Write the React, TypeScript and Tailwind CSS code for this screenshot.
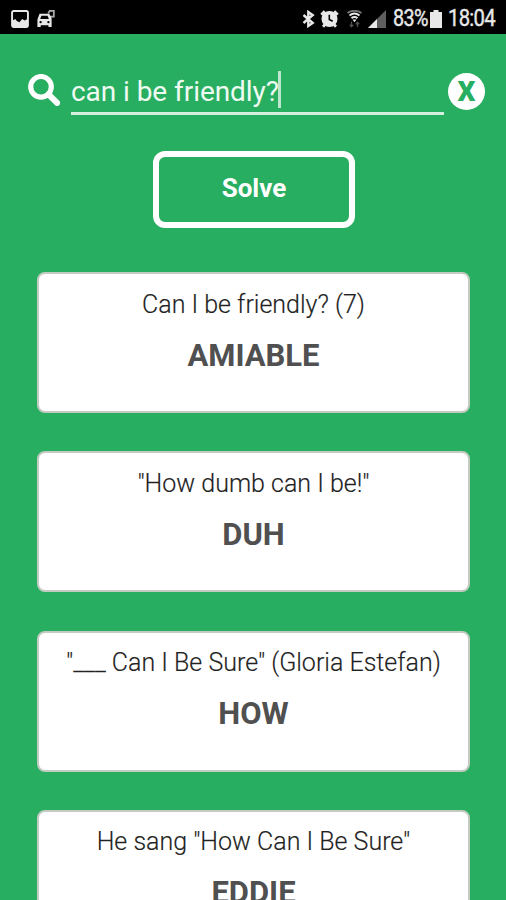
import { useState } from "react";

const results = [
  { clue: "Can I be friendly? (7)", answer: "AMIABLE" },
  { clue: "\"How dumb can I be!\"", answer: "DUH" },
  { clue: "\"___ Can I Be Sure\" (Gloria Estefan)", answer: "HOW" },
  { clue: "He sang \"How Can I Be Sure\"", answer: "EDDIE" },
];

function StatusBar() {
  return (
    <div className="flex h-[34px] shrink-0 items-center bg-black pt-[3px] pr-[11px] pl-[11px] text-[#e8e8e8]">
      <svg className="h-[18px] w-[18px]" viewBox="0 0 17 17">
        <rect x="1" y="1" width="15" height="15" rx="1.5" fill="none" stroke="currentColor" strokeWidth="1.8" />
        <path d="M1.5 10 4 8.5l1.5 2L8 11.5l2.5-3L13 10l2.5-1.5v7h-14z" fill="currentColor" />
      </svg>
      <svg className="ml-2 h-[18px] w-[18px]" viewBox="0 0 17 17" fill="currentColor">
        <path
          fillRule="evenodd"
          d="M2.4 3.5h9.2l2.2 5V16h-3v-1.5H3.5V16H.4V9zM4.2 5.4 3 8.4h8.2L10 5.4zM3.4 10.4a1.1 1.1 0 1 0 0 2.2 1.1 1.1 0 0 0 0-2.2m7.4 0a1.1 1.1 0 1 0 0 2.2 1.1 1.1 0 0 0 0-2.2"
        />
        <path d="M10.5 3.2 12 .9h3.9v5.4h-3v2" fill="none" stroke="currentColor" strokeWidth="1.6" opacity=".75" />
      </svg>
      <div className="ml-auto flex items-center">
        <svg className="h-[18px] w-[13px]" viewBox="0 0 13 18" fill="none" stroke="currentColor" strokeWidth="2.4">
          <path d="m1.5 5 9.2 8L6.3 16V2l4.4 3-9.2 8" />
        </svg>
        <svg className="ml-[5px] h-[18px] w-[19px]" viewBox="0 0 19 18">
          <circle cx="9.5" cy="9" r="8" fill="currentColor" />
          <path d="M1.3 4.8 4.8 1.3M17.7 4.8l-3.5-3.5M3 16.7l2-2.2M16 16.7l-2-2.2" stroke="currentColor" strokeWidth="2.8" />
          <path d="M9.3 4.8v4.7l3.4 1.7" fill="none" stroke="black" strokeWidth="1.6" />
        </svg>
        <svg className="ml-[7px] h-[18px] w-[17px]" viewBox="0 0 17 18" fill="none" stroke="currentColor">
          <path d="M1.5 3c4-3 10-3 14 0" strokeWidth="1.8" opacity=".5" />
          <path d="M3.5 5.5c3-2.3 7-2.3 10 0M5.5 8.1c2-1.5 4-1.5 6 0" strokeWidth="2" />
          <path d="m6.5 9.5 2 2.7 2-2.7z" fill="currentColor" stroke="none" />
          <path d="M5.5 11.5v5M3.8 14.8l1.7 1.9 1.7-1.9M11.5 17v-4.5M9.8 14.2l1.7-1.9 1.7 1.9" strokeWidth="1.3" opacity=".35" />
        </svg>
        <svg className="ml-[5px] h-[18px] w-[18px]" viewBox="0 0 18 18">
          <path d="M18 0v18H0z" fill="#5f5f5f" />
          <path d="M9 9v9H0z" fill="currentColor" />
        </svg>
        <span className="ml-[7px] w-[34px] origin-left scale-x-[0.86] text-[23px] leading-none tracking-[-0.7px] whitespace-nowrap [-webkit-text-stroke:0.4px]">83%</span>
        <svg className="ml-[3px] h-[18px] w-3" viewBox="0 0 12 18" fill="currentColor">
          <path d="M3.5 0h5v2H12v16H0V2h3.5z" />
        </svg>
        <span className="ml-1.5 w-[47px] origin-left scale-x-[0.88] text-[23px] leading-none tracking-[-0.8px] whitespace-nowrap [-webkit-text-stroke:0.4px]">18:04</span>
      </div>
    </div>
  );
}

export default function App() {
  const [query, setQuery] = useState("can i be friendly?");

  return (
    <div className="flex h-[900px] w-[506px] flex-col overflow-hidden bg-[#27ae60] font-[Roboto,sans-serif]">
      <StatusBar />

      {/* Search field */}
      <div className="mt-[37px] flex h-11 shrink-0 pr-[21px] pl-7">
        <svg className="mt-[3px] h-8 w-8" viewBox="0 0 32 32" fill="none" stroke="white">
          <circle cx="13" cy="12.8" r="10.3" strokeWidth="5.2" />
          <path d="m20.5 20.3 8.6 8.6" strokeWidth="6" strokeLinecap="round" />
        </svg>
        <div className="ml-[11px] flex w-[373px] border-b-[3px] border-[#d5efdf] pb-1">
          <span className="text-[28px] leading-[41px] tracking-[-0.06px] whitespace-nowrap text-[#eefaf2]">{query}</span>
          <span className="-ml-px h-[37px] w-[3px] bg-[#bfe6cf]" />
        </div>
        <button
          onClick={() => setQuery("")}
          className="mt-0.5 ml-1 flex h-[37px] w-[37px] items-center justify-center rounded-full bg-white pt-px text-[28px] leading-none font-black text-[#27ae60]"
        >
          X
        </button>
      </div>

      <button className="mx-auto mt-9 h-[77px] w-[202px] shrink-0 translate-x-px rounded-xl border-[6px] border-white pb-0.5 text-[26px] font-bold text-white">
        Solve
      </button>

      {/* Results */}
      <div className="mt-11 flex flex-col gap-[38.3px] pr-9 pl-[37px] text-center">
        {results.map((r) => (
          <div
            key={r.answer}
            className="h-[141px] shrink-0 rounded-lg border-2 border-[#c3cbc2] bg-white pt-[12.5px]"
          >
            <p className="text-[25px] leading-9 font-light whitespace-nowrap text-[#222] [-webkit-text-stroke:0.15px]">{r.clue}</p>
            <p className="mt-[15px] text-[31px] leading-9 font-bold text-[#505050]">{r.answer}</p>
          </div>
        ))}
      </div>
    </div>
  );
}
